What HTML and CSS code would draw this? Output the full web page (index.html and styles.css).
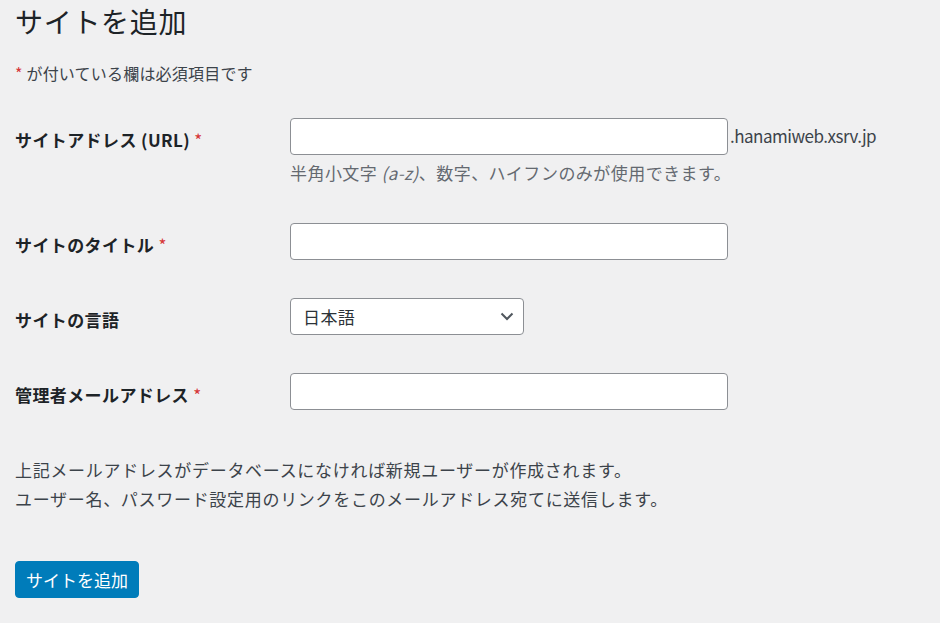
FILE: index.html
```html
<!DOCTYPE html>
<html lang="ja">
<head>
<meta charset="utf-8">
<title>サイトを追加</title>
<link rel="stylesheet" href="styles.css">
</head>
<body>
<div class="wrap">
  <h1 class="title">サイトを追加</h1>
  <p class="note"><span class="req">*</span> が付いている欄は必須項目です</p>
  <form class="form">
    <div class="row">
      <label class="label" for="addr">サイトアドレス (URL) <span class="req">*</span></label>
      <div class="field">
        <div class="addr">
          <input id="addr" class="input" type="text">
          <span class="domain">.hanamiweb.xsrv.jp</span>
        </div>
        <p class="desc">半角小文字 <i>(a-z)</i>、数字、ハイフンのみが使用できます。</p>
      </div>
    </div>
    <div class="row">
      <label class="label" for="title">サイトのタイトル <span class="req">*</span></label>
      <div class="field"><input id="title" class="input" type="text"></div>
    </div>
    <div class="row">
      <label class="label" for="lang">サイトの言語</label>
      <div class="field">
        <div class="select-wrap">
          <select id="lang" class="select"><option>日本語</option></select>
          <svg class="chev" width="14" height="9" viewBox="0 0 14 9"><path d="M1.5 1.5 L7 7 L12.5 1.5" fill="none" stroke="#50575e" stroke-width="2"/></svg>
        </div>
      </div>
    </div>
    <div class="row">
      <label class="label" for="mail">管理者メールアドレス <span class="req">*</span></label>
      <div class="field"><input id="mail" class="input" type="email"></div>
    </div>
    <p class="info">上記メールアドレスがデータベースになければ新規ユーザーが作成されます。<br>ユーザー名、パスワード設定用のリンクをこのメールアドレス宛てに送信します。</p>
    <button class="button" type="button">サイトを追加</button>
  </form>
</div>
</body>
</html>
```

FILE: styles.css
```css
html, body {
  margin: 0;
  padding: 0;
  background: #f0f0f1;
}
body {
  font-family: "Noto Sans CJK JP", "Noto Sans", sans-serif;
  color: #1d2327;
}
.wrap {
  padding: 0 15px;
}
.title {
  margin: 0;
  padding-top: 3px;
  font-size: 28px;
  line-height: 36px;
  font-weight: 400;
  letter-spacing: 0.7px;
  color: #1d2327;
}
.note {
  margin: 22px 0 0;
  font-size: 16px;
  line-height: 24px;
  letter-spacing: 0.2px;
  color: #3c434a;
}
.req {
  color: #d63638;
  font-weight: 400;
}
.form {
  margin-top: 33px;
}
.row {
  display: grid;
  grid-template-columns: 275px 1fr;
  margin-bottom: 38px;
}
.label {
  margin-top: 10px;
  font-size: 17px;
  line-height: 24px;
  font-weight: 700;
  letter-spacing: 0.4px;
  color: #1d2327;
}
.field {
  display: flex;
  flex-direction: column;
  align-items: flex-start;
}
.addr {
  display: flex;
  align-items: center;
  gap: 2px;
}
.input {
  box-sizing: border-box;
  width: 438px;
  height: 37px;
  margin: 0;
  border: 1px solid #8c8f94;
  border-radius: 4px;
  background: #fff;
  font: inherit;
  font-size: 17px;
  padding: 0 10px;
}
.domain {
  font-size: 17px;
  line-height: 24px;
  letter-spacing: -0.5px;
  color: #3c434a;
  margin-top: -1px;
}
.desc {
  margin: 6px 0 0;
  font-size: 17px;
  line-height: 24px;
  letter-spacing: 0.45px;
  color: #646970;
}
.select-wrap {
  position: relative;
  width: 234px;
}
.select {
  appearance: none;
  -webkit-appearance: none;
  box-sizing: border-box;
  width: 234px;
  height: 37px;
  margin: 0;
  border: 1px solid #8c8f94;
  border-radius: 4px;
  background: #fff;
  font: inherit;
  font-size: 17px;
  letter-spacing: 0.4px;
  color: #2c3338;
  padding: 0 30px 0 12px;
}
.chev {
  position: absolute;
  right: 10px;
  top: 14px;
  pointer-events: none;
}
.info {
  margin: 45px 0 0;
  font-size: 17px;
  line-height: 29px;
  letter-spacing: 0.7px;
  color: #3c434a;
}
.button {
  display: block;
  margin-top: 48px;
  box-sizing: border-box;
  width: 124px;
  height: 37px;
  padding: 0;
  border: 1px solid #007cba;
  border-radius: 4px;
  background: #007cba;
  color: #fff;
  font: inherit;
  font-size: 17px;
  line-height: 35px;
}
```
